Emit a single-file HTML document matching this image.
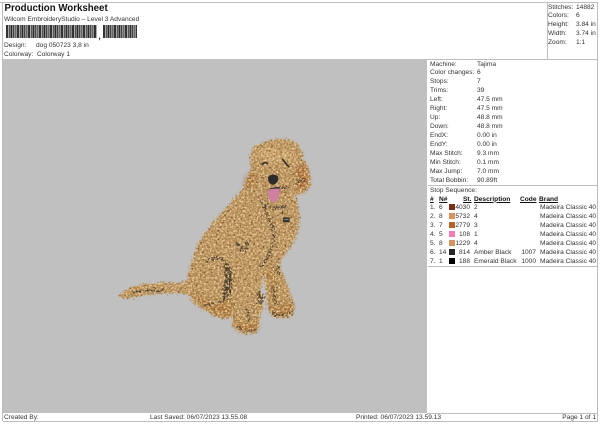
<!DOCTYPE html>
<html><head><meta charset="utf-8">
<style>
html,body{margin:0;padding:0;background:#fff}
#p{position:relative;width:600px;height:424px;overflow:hidden;background:#fff;font-family:"Liberation Sans",Arial,sans-serif;font-size:6.6px;color:#333;filter:blur(.3px)}
#p div{position:absolute;white-space:nowrap;line-height:9px}
.l{background:#bdbdbd}
.s{width:5.500px;height:6px}
.u{text-decoration:underline;font-weight:bold;color:#111}
.b{background:repeating-linear-gradient(90deg,#333 0 2px,#aaa 2px 3px,#555 3px 4px,#ccc 4px 4.600px,#2a2a2a 4.600px 6px,#888 6px 7px,#444 7px 8.500px,#ddd 8.500px 9.200px,#666 9.200px 10.500px,#bbb 10.500px 11px)}
</style></head><body><div id="p">
<div class="l" style="left:0;top:2px;width:598px;height:1px"></div>
<div class="l" style="left:597px;top:2px;width:1px;height:419px"></div>
<div class="l" style="left:2px;top:2px;width:1px;height:419px"></div>
<div class="l" style="left:547px;top:2px;width:1px;height:57px"></div>
<div class="l" style="left:3px;top:421px;width:595px;height:1px"></div>
<div style="left:3px;top:59px;width:424px;height:354px;background:#c0c0c0"></div>
<div class="l" style="left:427px;top:59px;width:171px;height:1px"></div>
<div class="l" style="left:428px;top:185px;width:169px;height:1px"></div>
<div class="l" style="left:428px;top:266px;width:169px;height:1px"></div>
<div class="l" style="left:427px;top:413px;width:171px;height:1px"></div>

<div style="left:4.500px;top:3px;font-size:9.700px;line-height:11px;font-weight:bold;color:#111">Production Worksheet</div>
<div style="left:4px;top:15px">Wilcom EmbroideryStudio – Level 3 Advanced</div>
<div class="b" style="left:6px;top:25px;width:91px;height:13px"></div>
<div style="left:98.500px;top:32px;font-size:8px;font-weight:bold;color:#111">,</div>
<div class="b" style="left:103px;top:25px;width:34px;height:13px"></div>
<div style="left:4px;top:41px">Design:</div><div style="left:36px;top:41px">dog 050723 3,8 in</div>
<div style="left:4px;top:50px">Colorway:</div><div style="left:37px;top:50px">Colorway 1</div>

<div style="left:548px;top:3px">Stitches:</div><div style="left:576px;top:3px">14882</div>
<div style="left:548px;top:11px">Colors:</div><div style="left:576px;top:11px">6</div>
<div style="left:548px;top:20px">Height:</div><div style="left:576px;top:20px">3.84 in</div>
<div style="left:548px;top:29px">Width:</div><div style="left:576px;top:29px">3.74 in</div>
<div style="left:548px;top:38px">Zoom:</div><div style="left:576px;top:38px">1:1</div>

<div style="left:430px;top:60px">Machine:</div><div style="left:477px;top:60px">Tajima</div>
<div style="left:430px;top:68px">Color changes:</div><div style="left:477px;top:68px">6</div>
<div style="left:430px;top:77px">Stops:</div><div style="left:477px;top:77px">7</div>
<div style="left:430px;top:86px">Trims:</div><div style="left:477px;top:86px">39</div>
<div style="left:430px;top:95px">Left:</div><div style="left:477px;top:95px">47.5 mm</div>
<div style="left:430px;top:104px">Right:</div><div style="left:477px;top:104px">47.5 mm</div>
<div style="left:430px;top:113px">Up:</div><div style="left:477px;top:113px">48.8 mm</div>
<div style="left:430px;top:122px">Down:</div><div style="left:477px;top:122px">48.8 mm</div>
<div style="left:430px;top:131px">EndX:</div><div style="left:477px;top:131px">0.00 in</div>
<div style="left:430px;top:140px">EndY:</div><div style="left:477px;top:140px">0.00 in</div>
<div style="left:430px;top:149px">Max Stitch:</div><div style="left:477px;top:149px">9.3 mm</div>
<div style="left:430px;top:158px">Min Stitch:</div><div style="left:477px;top:158px">0.1 mm</div>
<div style="left:430px;top:167px">Max Jump:</div><div style="left:477px;top:167px">7.0 mm</div>
<div style="left:430px;top:176px">Total Bobbin:</div><div style="left:477px;top:176px">90.89ft</div>
<div style="left:430px;top:185.500px">Stop Sequence:</div>

<div class="u" style="left:430px;top:194.500px">#</div>
<div class="u" style="left:439px;top:194.500px">N#</div>
<div class="u" style="left:463px;top:194.500px">St.</div>
<div class="u" style="left:474px;top:194.500px">Description</div>
<div class="u" style="left:520px;top:194.500px">Code</div>
<div class="u" style="left:539px;top:194.500px">Brand</div>

<div style="left:430px;top:203px">1.</div><div style="left:439px;top:203px">6</div><div class="s" style="left:449px;top:204px;background:#7a3018"></div><div style="right:130px;top:203px">4030</div><div style="left:474px;top:203px">2</div><div style="left:540px;top:203px">Madeira Classic 40</div>
<div style="left:430px;top:212px">2.</div><div style="left:439px;top:212px">8</div><div class="s" style="left:449px;top:213px;background:#d8945f"></div><div style="right:130px;top:212px">5732</div><div style="left:474px;top:212px">4</div><div style="left:540px;top:212px">Madeira Classic 40</div>
<div style="left:430px;top:221px">3.</div><div style="left:439px;top:221px">7</div><div class="s" style="left:449px;top:222px;background:#b5642a"></div><div style="right:130px;top:221px">2779</div><div style="left:474px;top:221px">3</div><div style="left:540px;top:221px">Madeira Classic 40</div>
<div style="left:430px;top:230px">4.</div><div style="left:439px;top:230px">5</div><div class="s" style="left:449px;top:231px;background:#f07fb8"></div><div style="right:130px;top:230px">108</div><div style="left:474px;top:230px">1</div><div style="left:540px;top:230px">Madeira Classic 40</div>
<div style="left:430px;top:239px">5.</div><div style="left:439px;top:239px">8</div><div class="s" style="left:449px;top:240px;background:#d8945f"></div><div style="right:130px;top:239px">1229</div><div style="left:474px;top:239px">4</div><div style="left:540px;top:239px">Madeira Classic 40</div>
<div style="left:430px;top:248px">6.</div><div style="left:439px;top:248px">14</div><div class="s" style="left:449px;top:249px;background:#252525"></div><div style="right:130px;top:248px">814</div><div style="left:474px;top:248px">Amber Black</div><div style="right:64px;top:248px">1007</div><div style="left:540px;top:248px">Madeira Classic 40</div>
<div style="left:430px;top:257px">7.</div><div style="left:439px;top:257px">1</div><div class="s" style="left:449px;top:258px;background:#000"></div><div style="right:130px;top:257px">188</div><div style="left:474px;top:257px">Emerald Black</div><div style="right:64px;top:257px">1000</div><div style="left:540px;top:257px">Madeira Classic 40</div>

<div style="left:4px;top:412.500px">Created By:</div>
<div style="left:150px;top:412.500px">Last Saved: 06/07/2023 13.55.08</div>
<div style="left:356px;top:412.500px">Printed: 06/07/2023 13.59.13</div>
<div style="right:4px;top:412.500px">Page 1 of 1</div>

<svg style="position:absolute;left:100px;top:130px" width="220" height="210" viewBox="0 0 660 630">
<defs>
<filter id="f" x="-5%" y="-5%" width="110%" height="110%" color-interpolation-filters="sRGB">
<feTurbulence type="fractalNoise" baseFrequency=".16" numOctaves="2" seed="4" result="n"/>
<feDisplacementMap in="SourceGraphic" in2="n" scale="24" xChannelSelector="R" yChannelSelector="G" result="d"/>
<feTurbulence type="fractalNoise" baseFrequency=".15 .2" numOctaves="2" seed="9"/>
<feColorMatrix type="matrix" values="0 0 0 0 .45  0 0 0 0 .3  0 0 0 0 .13  3.500 0 0 0 -1.85"/>
<feComposite in2="d" operator="in" result="dark"/>
<feTurbulence type="fractalNoise" baseFrequency=".17" numOctaves="2" seed="21"/>
<feColorMatrix type="matrix" values="0 0 0 0 .91  0 0 0 0 .79  0 0 0 0 .58  0 4 0 0 -1.85"/>
<feComposite in2="d" operator="in" result="light"/>
<feMerge><feMergeNode in="d"/><feMergeNode in="dark"/><feMergeNode in="light"/></feMerge>
</filter>
<filter id="b"><feGaussianBlur stdDeviation="7"/></filter>
</defs>
<g filter="url(#f)">
<path fill="#b8925e" d="M56 498C78 474 115 462 160 459C190 456 225 459 260 456C266 420 278 375 298 335C318 295 368 245 403 205C423 185 438 160 450 125C453 105 448 85 453 62C470 36 520 22 562 27C592 32 607 58 610 88C628 108 634 135 630 167C617 192 597 197 582 192C596 225 604 265 596 300C584 340 558 370 538 400C552 440 574 490 583 530C585 552 572 566 545 565C523 563 508 555 503 537C499 505 497 470 490 430C485 465 480 490 478 508C492 513 494 530 482 547C477 580 480 597 470 607C445 618 413 608 400 592C396 577 398 567 396 558C378 572 353 567 333 552C308 537 276 527 273 502C270 496 260 492 240 490C200 488 150 492 110 501C90 507 68 510 56 498Z"/>
<g filter="url(#b)">
<path fill="#a86a30" opacity=".7" d="M280 500C300 520 350 560 395 555L400 520C360 530 320 515 280 490Z"/>
<path fill="#a86a30" opacity=".7" d="M440 175C425 150 445 125 465 130C475 150 460 170 440 175Z"/>
<path fill="#a65f28" opacity=".8" d="M595 100C625 115 630 160 610 185C590 190 590 130 595 100Z"/>
<path fill="#d6b078" opacity=".6" d="M470 70C500 40 570 40 590 85C570 100 500 105 470 70Z"/>
<path fill="#a86a30" opacity=".7" d="M405 590C420 605 450 610 470 595L470 570C450 585 425 585 405 570Z"/>
<path fill="#a0602a" opacity=".7" d="M510 540C525 555 560 560 578 535L570 520C550 535 530 540 510 525Z"/>
<path fill="#a4682f" opacity=".6" d="M498 420C510 440 515 500 510 530L530 510C530 470 520 430 510 400Z"/>
</g>
<g fill="none" stroke="#4a3b2c" stroke-linecap="round">
<path fill="#4a3a2a" stroke="none" d="M372 398C387 393 397 420 397 450C397 480 387 505 370 512C366 480 378 440 372 398Z"/>
<path stroke-width="6" d="M322 392C335 382 355 380 368 388"/>
<path stroke-width="7" d="M412 340C420 350 425 355 430 360M440 335C442 345 442 355 436 362"/>
<path stroke-width="6" d="M480 212C495 225 495 245 505 265C520 285 525 310 522 335C515 360 505 375 495 395C485 405 480 415 475 420"/>
<path stroke-width="6" d="M495 225C515 240 540 230 560 230M545 230V250"/>
<path stroke-width="6" d="M535 180C545 175 555 175 562 170M590 160C598 150 605 150 612 150"/>
<path stroke-width="6" d="M440 538C445 550 448 560 450 575M315 525C335 525 350 515 370 515"/>
<path stroke-width="5" d="M100 488C125 478 150 483 190 480M520 470C525 490 525 510 528 520M535 410V430"/>
<path stroke-width="5" d="M410 590C430 605 450 605 468 598M510 545C530 560 555 560 575 545"/>
<path fill="#5f4a33" stroke="none" d="M472 490C490 478 495 500 490 510C485 522 475 522 470 520Z"/>
</g>
</g>
<path fill="#2b2b2b" d="M504 145C504 132 530 130 535 142C536 155 525 165 518 164C510 162 504 155 504 145Z"/>
<path fill="#3a3530" d="M503 180C510 172 530 172 540 170L538 178H506Z"/>
<path fill="#cf7fa0" d="M504 179C515 176 530 176 539 176C540 195 532 217 520 218C508 216 502 198 504 179Z"/>
<path fill="none" stroke="#3f3226" stroke-width="5" stroke-linecap="round" d="M487 103C492 97 498 97 503 101M547 88C552 92 558 103 566 110"/>
<rect x="549" y="262" width="20" height="15" fill="#3a3632"/>
<path stroke="#b8a58c" stroke-width="2" d="M552 269H566"/>
</svg>
</div></body></html>
